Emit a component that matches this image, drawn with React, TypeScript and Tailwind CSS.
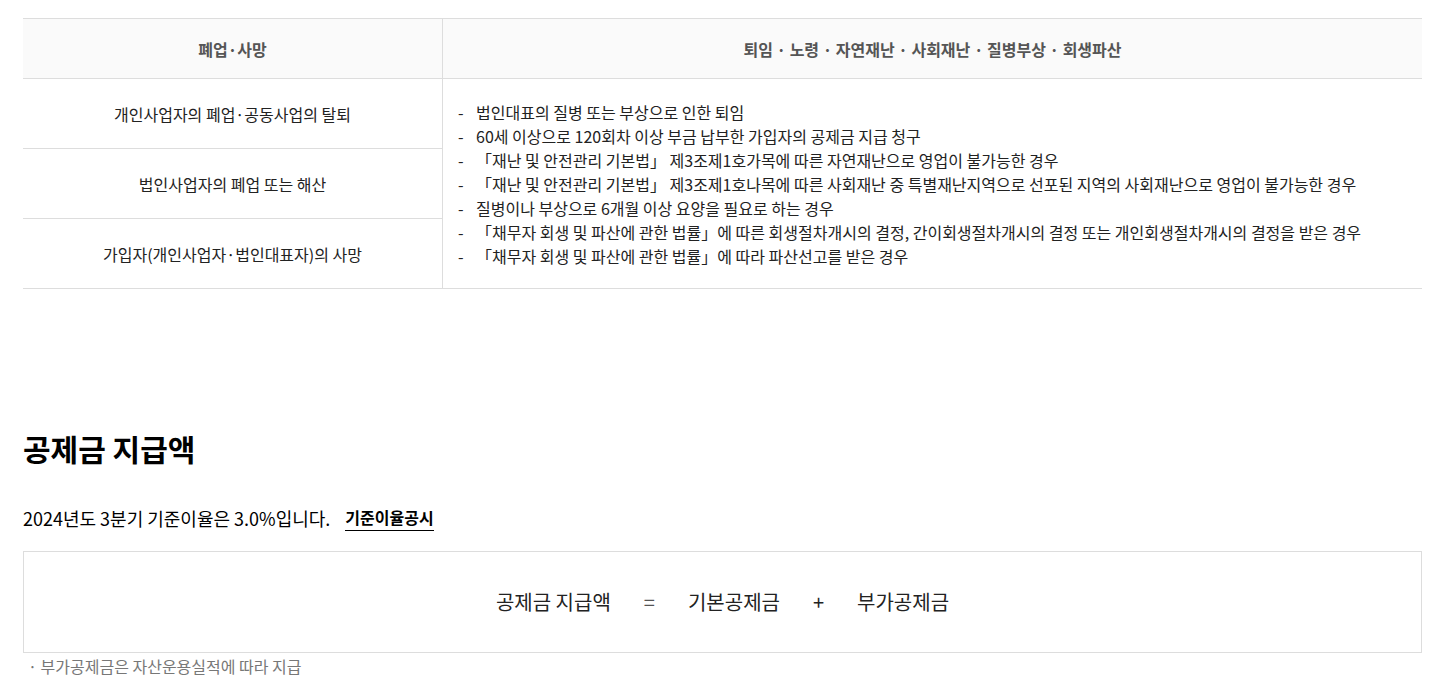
import React from 'react';

const leftRows = [
  '개인사업자의 폐업·공동사업의 탈퇴',
  '법인사업자의 폐업 또는 해산',
  '가입자(개인사업자·법인대표자)의 사망',
];

const rightItems = [
  '법인대표의 질병 또는 부상으로 인한 퇴임',
  '60세 이상으로 120회차 이상 부금 납부한 가입자의 공제금 지급 청구',
  '「재난 및 안전관리 기본법」 제3조제1호가목에 따른 자연재난으로 영업이 불가능한 경우',
  '「재난 및 안전관리 기본법」 제3조제1호나목에 따른 사회재난 중 특별재난지역으로 선포된 지역의 사회재난으로 영업이 불가능한 경우',
  '질병이나 부상으로 6개월 이상 요양을 필요로 하는 경우',
  '「채무자 회생 및 파산에 관한 법률」에 따른 회생절차개시의 결정, 간이회생절차개시의 결정 또는 개인회생절차개시의 결정을 받은 경우',
  '「채무자 회생 및 파산에 관한 법률」에 따라 파산선고를 받은 경우',
];

const App: React.FC = () => {
  return (
    <div
      className="min-h-screen bg-white pl-[23px] pr-[21px] pt-[18px] text-[#222]"
      style={{ fontFamily: '"Noto Sans CJK KR", "Noto Sans", sans-serif' }}
    >
      {/* 지급사유 표 */}
      <div className="grid grid-cols-[420px_1fr] border-t border-b border-[#ddd]">
        <div className="flex h-[60px] items-center justify-center border-b border-r border-[#ddd] bg-[#fafafa] text-[16px] font-bold text-[#555]">
          폐업·사망
        </div>
        <div className="flex h-[60px] items-center justify-center border-b border-[#ddd] bg-[#fafafa] text-[16px] font-bold text-[#555]">
          퇴임 · 노령 · 자연재난 · 사회재난 · 질병부상 · 회생파산
        </div>
        <div className="flex flex-col border-r border-[#ddd]">
          {leftRows.map((r, i) => (
            <div
              key={r}
              className={`flex items-center justify-center text-[16px] ${i < 2 ? 'h-[70px] border-b border-[#ddd]' : 'h-[69px]'}`}
            >
              {r}
            </div>
          ))}
        </div>
        <ul className="flex flex-col justify-center pl-[15px] text-[16px] leading-[24px]">
          {rightItems.map((t) => (
            <li key={t} className="flex">
              <span className="w-[18px] shrink-0">-</span>
              <span>{t}</span>
            </li>
          ))}
        </ul>
      </div>

      {/* 공제금 지급액 */}
      <h2 className="mt-[139px] text-[30px] font-bold leading-[40px] text-black">공제금 지급액</h2>
      <div className="mt-[36px] flex items-center text-[18px] leading-[26px] text-black">
        <span>2024년도 3분기 기준이율은 3.0%입니다.</span>
        <a className="ml-[15px] border-b border-black text-[16px] font-bold">기준이율공시</a>
      </div>
      <div className="mt-[20px] flex h-[102px] items-center justify-center border border-[#ddd] text-[20px] text-[#222]">
        <span>공제금 지급액</span>
        <span className="mx-[33px] text-[#555]">=</span>
        <span>기본공제금</span>
        <span className="mx-[33px]">+</span>
        <span>부가공제금</span>
      </div>
      <p className="mt-[1px] pl-[5px] text-[16px] leading-[24px] text-[#777]">· 부가공제금은 자산운용실적에 따라 지급</p>
    </div>
  );
};

export default App;
